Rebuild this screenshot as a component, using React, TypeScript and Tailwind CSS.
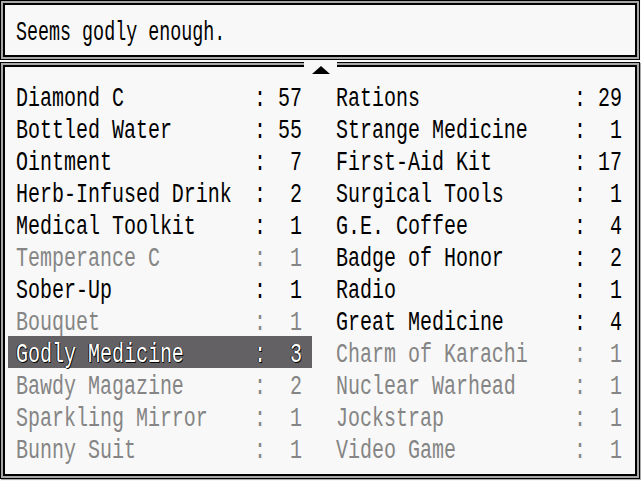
import React from 'react';

type Item = { name: string; qty: number; off?: boolean };

const LEFT: Item[] = [
  { name: 'Diamond C', qty: 57 },
  { name: 'Bottled Water', qty: 55 },
  { name: 'Ointment', qty: 7 },
  { name: 'Herb-Infused Drink', qty: 2 },
  { name: 'Medical Toolkit', qty: 1 },
  { name: 'Temperance C', qty: 1, off: true },
  { name: 'Sober-Up', qty: 1 },
  { name: 'Bouquet', qty: 1, off: true },
  { name: 'Godly Medicine', qty: 3, off: true },
  { name: 'Bawdy Magazine', qty: 2, off: true },
  { name: 'Sparkling Mirror', qty: 1, off: true },
  { name: 'Bunny Suit', qty: 1, off: true },
];

const RIGHT: Item[] = [
  { name: 'Rations', qty: 29 },
  { name: 'Strange Medicine', qty: 1 },
  { name: 'First-Aid Kit', qty: 17 },
  { name: 'Surgical Tools', qty: 1 },
  { name: 'G.E. Coffee', qty: 4 },
  { name: 'Badge of Honor', qty: 2 },
  { name: 'Radio', qty: 1 },
  { name: 'Great Medicine', qty: 4 },
  { name: 'Charm of Karachi', qty: 1, off: true },
  { name: 'Nuclear Warhead', qty: 1, off: true },
  { name: 'Jockstrap', qty: 1, off: true },
  { name: 'Video Game', qty: 1, off: true },
];

const SELECTED = 'Godly Medicine';

// pixel-ish font: tall mono glyphs squeezed to 12px advance
const FONT = "font-['Liberation_Mono','DejaVu_Sans_Mono',monospace] text-[27px]";

function Frame({ className, children }: { className?: string; children: React.ReactNode }) {
  return (
    <div className={`border border-black ${className ?? ''}`}>
      <div className="h-full border-2 border-[#a8a8a8]">
        <div className="h-full border-2 border-black bg-[#f8f8f8]">{children}</div>
      </div>
    </div>
  );
}

function Row({ item }: { item: Item }) {
  const sel = item.name === SELECTED;
  const color = sel
    ? 'text-white [text-shadow:-1px_0_0_#000,1px_1px_0_#000]'
    : item.off
      ? 'text-[#858585]'
      : 'text-black';
  return (
    <div
      className={`grid h-[32px] grid-cols-[238px_12px_36px] pl-[8px] pr-[10px] leading-[38px] ${color} ${
        sel ? 'bg-[#636163]' : ''
      }`}
    >
      <span className="origin-left scale-x-[0.74] whitespace-nowrap">{item.name}</span>
      <span className="origin-left scale-x-[0.74]">:</span>
      <span className="origin-right scale-x-[0.74] text-right">{item.qty}</span>
    </div>
  );
}

export default function App() {
  return (
    <div className={`relative h-[481px] w-[641px] overflow-hidden bg-[#f8f8f8] ${FONT}`}>
      <Frame className="h-[60px] w-[640px]">
        <div className="pl-[11px] pt-[13px] leading-[31px] text-black">
          <span className="inline-block origin-left scale-x-[0.68] whitespace-nowrap">Seems godly enough.</span>
        </div>
      </Frame>

      <Frame className="mt-[2px] h-[417px] w-[640px] shadow-[1px_1px_0_#a8a8a8]">
        <div className="flex gap-[16px] pl-[3px] pt-[13px]">
          <div className="flex w-[304px] flex-col">
            {LEFT.map((it) => (
              <Row key={it.name} item={it} />
            ))}
          </div>
          <div className="flex w-[304px] flex-col">
            {RIGHT.map((it) => (
              <Row key={it.name} item={it} />
            ))}
          </div>
        </div>
      </Frame>

      {/* scroll-up arrow sitting on the list frame */}
      <div className="absolute left-[304px] top-[62px] flex h-[11px] w-[33px] items-end justify-center bg-[#f8f8f8]">
        <svg width="18" height="8" viewBox="0 0 18 8" className="translate-y-[1px]">
          <polygon points="9,0 18,8 0,8" fill="#000" />
        </svg>
      </div>
    </div>
  );
}
